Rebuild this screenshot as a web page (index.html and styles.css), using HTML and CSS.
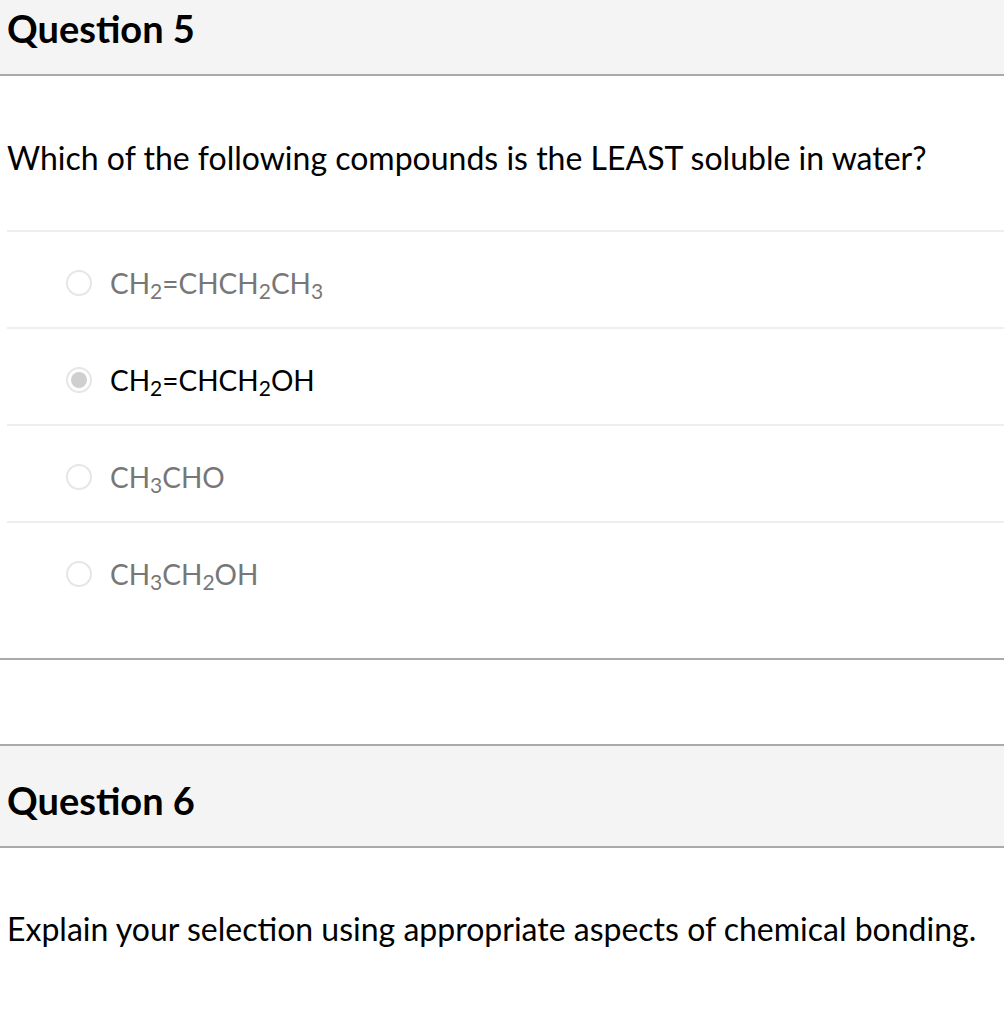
FILE: index.html
```html
<!DOCTYPE html>
<html>
<head>
<meta charset="utf-8">
<link rel="stylesheet" href="styles.css">
</head>
<body>
<div class="quiz">
  <section class="question">
    <header class="q-header"><h2>Question 5</h2></header>
    <div class="q-body">
      <p class="q-text">Which of the following compounds is the LEAST soluble in water?</p>
      <ul class="answers">
        <li class="answer"><span class="radio"></span><span class="label">CH<sub>2</sub>=CHCH<sub>2</sub>CH<sub>3</sub></span></li>
        <li class="answer selected"><span class="radio"></span><span class="label">CH<sub>2</sub>=CHCH<sub>2</sub>OH</span></li>
        <li class="answer"><span class="radio"></span><span class="label">CH<sub>3</sub>CHO</span></li>
        <li class="answer"><span class="radio"></span><span class="label">CH<sub>3</sub>CH<sub>2</sub>OH</span></li>
      </ul>
    </div>
  </section>
  <section class="question q6">
    <header class="q-header"><h2>Question 6</h2></header>
    <div class="q-body">
      <p class="q-text">Explain your selection using appropriate aspects of chemical bonding.</p>
    </div>
  </section>
</div>
</body>
</html>
```
FILE: styles.css
```css
html, body {
  margin: 0;
  padding: 0;
  background: #fff;
}
body {
  font-family: Lato, "Noto Sans", sans-serif;
  color: #000;
}
.quiz {
  width: 1004px;
}
.question {
  border-bottom: 2px solid #aaa;
}
.q6 {
  margin-top: 84px;
  border-top: 2px solid #aaa;
  border-bottom: none;
}
.q-header {
  box-sizing: border-box;
  background: #f4f4f4;
  border-bottom: 2px solid #aaa;
  height: 76px;
  padding: 5px 0 0 7px;
}
.q6 .q-header {
  height: 102px;
  padding-top: 31px;
}
.q-header h2 {
  margin: 0;
  font-size: 38px;
  font-weight: 700;
  line-height: 46px;
}
.q-body {
  padding-left: 7px;
}
.q-text {
  margin: 0;
  padding: 62px 0 52px;
  font-size: 32px;
  line-height: 40px;
  border-bottom: 2px solid #eee;
}
.q6 .q-text {
  padding-top: 61px;
  border-bottom: none;
}
.answers {
  list-style: none;
  margin: 0;
  padding: 0 0 40px;
}
.answer {
  box-sizing: border-box;
  display: flex;
  align-items: center;
  height: 97px;
  padding: 7px 0 0 59px;
  border-bottom: 2px solid #eee;
  color: #777;
}
.answer:last-child {
  border-bottom: none;
  height: 95px;
}
.answer.selected {
  color: #000;
}
.radio {
  flex: none;
  width: 22px;
  height: 22px;
  border: 2px solid #e6e6e6;
  border-radius: 50%;
  background: #fff;
  margin-right: 18px;
  position: relative;
}
.selected .radio::after {
  content: "";
  position: absolute;
  left: 3px;
  top: 3px;
  width: 16px;
  height: 16px;
  border-radius: 50%;
  background: #cfcfcf;
}
.label {
  font-size: 28px;
  line-height: 34px;
}
.label sub {
  font-size: 0.75em;
  line-height: 0;
  vertical-align: -0.25em;
}
```
